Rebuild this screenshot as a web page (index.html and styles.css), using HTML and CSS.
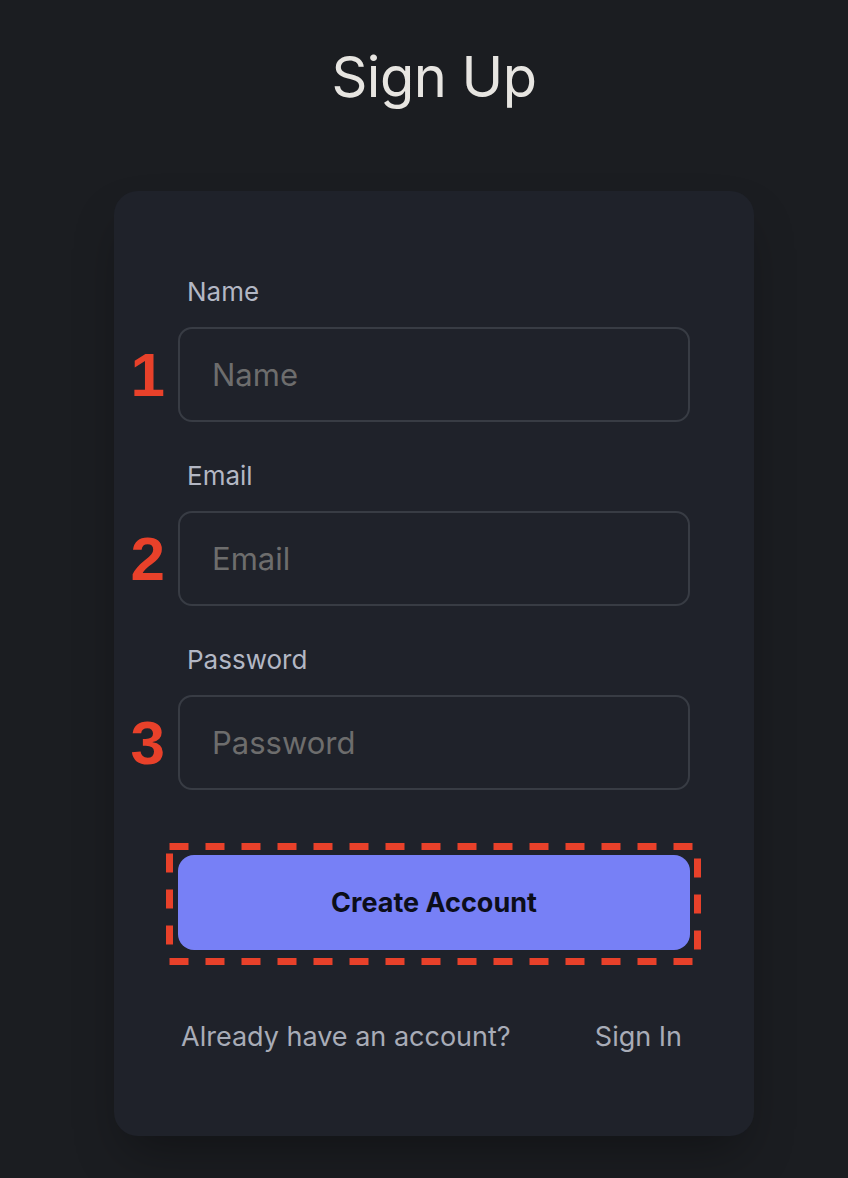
FILE: index.html
```html
<!DOCTYPE html>
<html lang="en">
<head>
<meta charset="utf-8">
<title>Sign Up</title>
<link rel="stylesheet" href="styles.css">
</head>
<body>
  <h1 class="title">Sign Up</h1>
  <form class="card">
    <div class="field">
      <label class="label" for="name">Name</label>
      <div class="input-wrap">
        <span class="marker">1</span>
        <input class="input" id="name" type="text" placeholder="Name">
      </div>
    </div>
    <div class="field">
      <label class="label" for="email">Email</label>
      <div class="input-wrap">
        <span class="marker">2</span>
        <input class="input" id="email" type="email" placeholder="Email">
      </div>
    </div>
    <div class="field">
      <label class="label" for="password">Password</label>
      <div class="input-wrap">
        <span class="marker">3</span>
        <input class="input" id="password" type="password" placeholder="Password">
      </div>
    </div>
    <div class="button-wrap">
      <svg class="dash-box" width="535" height="122" viewBox="0 0 535 122" aria-hidden="true">
        <rect x="3.5" y="3.5" width="528" height="115" fill="none" stroke="#e8412a" stroke-width="7" stroke-dasharray="19 17"/>
      </svg>
      <button class="button" type="button">Create Account</button>
    </div>
    <div class="footer">
      <span class="footer-text">Already have an account?</span>
      <a class="footer-link" href="#">Sign In</a>
    </div>
  </form>
</body>
</html>
```

FILE: styles.css
```css
* {
  box-sizing: border-box;
}

html, body {
  margin: 0;
  padding: 0;
}

body {
  background: #1b1d21;
  min-height: 1178px;
  padding-left: 20px;
  display: flex;
  flex-direction: column;
  align-items: center;
  font-family: Inter, "Noto Sans", sans-serif;
}

.title {
  margin: 44px 0 0;
  font-size: 56px;
  line-height: 67px;
  font-weight: 400;
  color: #e7e5e1;
  letter-spacing: -0.5px;
}

.card {
  margin-top: 80px;
  width: 640px;
  background: #1f222a;
  border-radius: 24px;
  padding: 86px 64px 84px;
  box-shadow: 0 25px 50px -12px rgba(0, 0, 0, 0.35);
  display: flex;
  flex-direction: column;
}

.field {
  display: flex;
  flex-direction: column;
  gap: 20px;
  margin-bottom: 39px;
}

.field:nth-child(3) {
  margin-bottom: 65px;
}

.label {
  padding-left: 9px;
  font-size: 26px;
  line-height: 30px;
  color: #b3b7c4;
}

.input-wrap {
  position: relative;
}

.marker {
  position: absolute;
  right: calc(100% + 13px);
  top: 50%;
  transform: translateY(-50%);
  font-family: "Liberation Sans", Arial, sans-serif;
  font-weight: 700;
  font-size: 62px;
  line-height: 1;
  color: #e8412a;
}

.input {
  display: block;
  width: 512px;
  height: 95px;
  margin: 0;
  padding: 0 32px;
  background: transparent;
  border: 2px solid #383c44;
  border-radius: 14px;
  font-family: inherit;
  font-size: 31px;
  color: #e0e0e0;
  outline: none;
}

.input::placeholder {
  color: #6d6d6d;
}

.button-wrap {
  position: relative;
}

.dash-box {
  position: absolute;
  left: -12px;
  top: -12px;
}

.button {
  position: relative;
  display: block;
  width: 512px;
  height: 95px;
  border: none;
  border-radius: 16px;
  background: #7780f6;
  color: #0c0e1a;
  font-family: inherit;
  font-size: 27px;
  font-weight: 700;
  cursor: pointer;
}

.footer {
  margin-top: 72px;
  display: flex;
  justify-content: space-between;
  padding: 0 8px 0 3px;
  font-size: 27px;
  line-height: 30px;
  color: #a8acb7;
}

.footer-link {
  color: #a8acb7;
  text-decoration: none;
}
```
